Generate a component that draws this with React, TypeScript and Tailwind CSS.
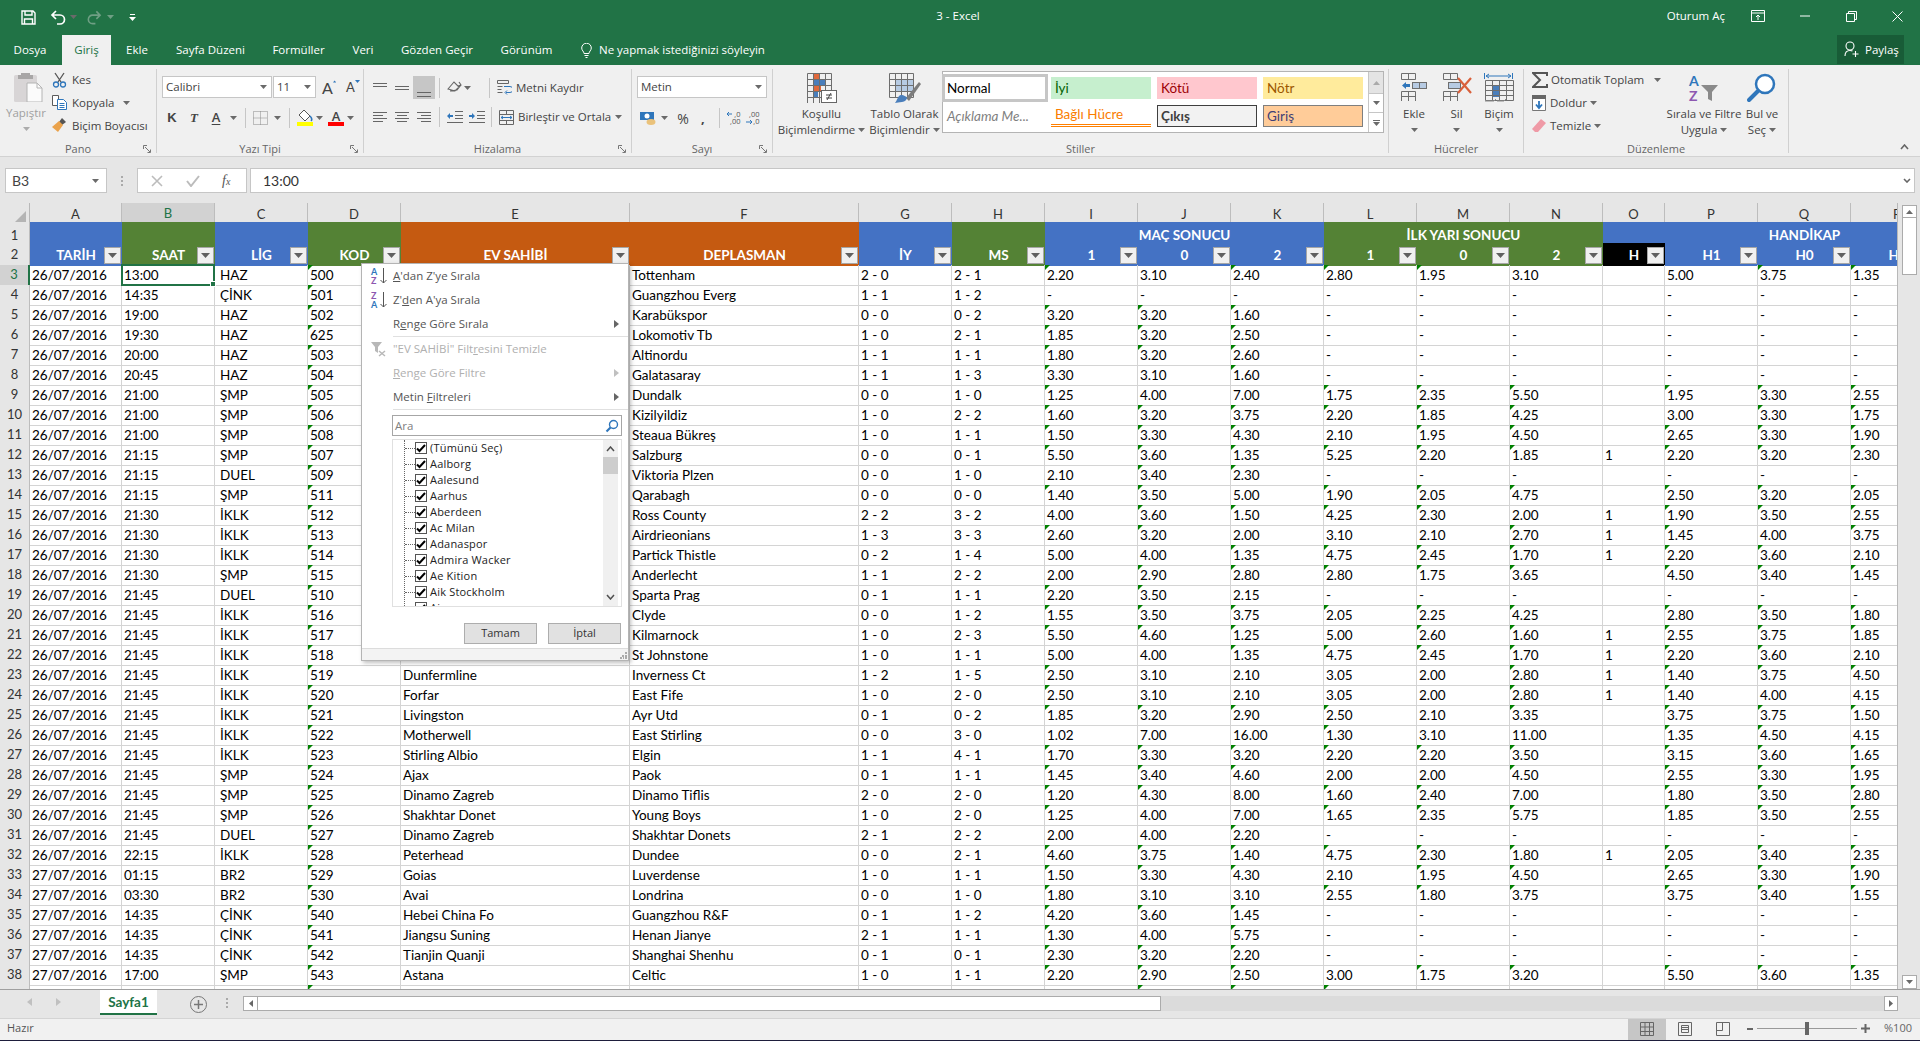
import React from "react";

const GRID = "grid grid-cols-[30px_92px_93px_93px_93px_229px_229px_93px_93px_93px_93px_93px_93px_93px_93px_62px_93px_93px_93px]";

const RAW = `26/07/2016|13:00|HAZ|500||Tottenham|2 - 0|2 - 1|2.20|3.10|2.40|2.80|1.95|3.10||5.00|3.75|1.35
26/07/2016|14:35|ÇİNK|501||Guangzhou Everg|1 - 1|1 - 2|-|-|-|-|-|-||-|-|-
26/07/2016|19:00|HAZ|502||Karabükspor|0 - 0|0 - 2|3.20|3.20|1.60|-|-|-||-|-|-
26/07/2016|19:30|HAZ|625||Lokomotiv Tb|1 - 0|2 - 1|1.85|3.20|2.50|-|-|-||-|-|-
26/07/2016|20:00|HAZ|503||Altinordu|1 - 1|1 - 1|1.80|3.20|2.60|-|-|-||-|-|-
26/07/2016|20:45|HAZ|504||Galatasaray|1 - 1|1 - 3|3.30|3.10|1.60|-|-|-||-|-|-
26/07/2016|21:00|ŞMP|505||Dundalk|0 - 0|1 - 0|1.25|4.00|7.00|1.75|2.35|5.50||1.95|3.30|2.55
26/07/2016|21:00|ŞMP|506||Kizilyildiz|1 - 0|2 - 2|1.60|3.20|3.75|2.20|1.85|4.25||3.00|3.30|1.75
26/07/2016|21:00|ŞMP|508||Steaua Bükreş|1 - 0|1 - 1|1.50|3.30|4.30|2.10|1.95|4.50||2.65|3.30|1.90
26/07/2016|21:15|ŞMP|507||Salzburg|0 - 0|0 - 1|5.50|3.60|1.35|5.25|2.20|1.85|1|2.20|3.20|2.30
26/07/2016|21:15|DUEL|509||Viktoria Plzen|0 - 0|1 - 0|2.10|3.40|2.30|-|-|-||-|-|-
26/07/2016|21:15|ŞMP|511||Qarabagh|0 - 0|0 - 0|1.40|3.50|5.00|1.90|2.05|4.75||2.50|3.20|2.05
26/07/2016|21:30|İKLK|512||Ross County|2 - 2|3 - 2|4.00|3.60|1.50|4.25|2.30|2.00|1|1.90|3.50|2.55
26/07/2016|21:30|İKLK|513||Airdrieonians|1 - 3|3 - 3|2.60|3.20|2.00|3.10|2.10|2.70|1|1.45|4.00|3.75
26/07/2016|21:30|İKLK|514||Partick Thistle|0 - 2|1 - 4|5.00|4.00|1.35|4.75|2.45|1.70|1|2.20|3.60|2.10
26/07/2016|21:30|ŞMP|515||Anderlecht|1 - 1|2 - 2|2.00|2.90|2.80|2.80|1.75|3.65||4.50|3.40|1.45
26/07/2016|21:45|DUEL|510||Sparta Prag|0 - 1|1 - 1|2.20|3.50|2.15|-|-|-||-|-|-
26/07/2016|21:45|İKLK|516||Clyde|0 - 0|1 - 2|1.55|3.50|3.75|2.05|2.25|4.25||2.80|3.50|1.80
26/07/2016|21:45|İKLK|517||Kilmarnock|1 - 0|2 - 3|5.50|4.60|1.25|5.00|2.60|1.60|1|2.55|3.75|1.85
26/07/2016|21:45|İKLK|518||St Johnstone|1 - 0|1 - 1|5.00|4.00|1.35|4.75|2.45|1.70|1|2.20|3.60|2.10
26/07/2016|21:45|İKLK|519|Dunfermline|Inverness Ct|1 - 2|1 - 5|2.50|3.10|2.10|3.05|2.00|2.80|1|1.40|3.75|4.50
26/07/2016|21:45|İKLK|520|Forfar|East Fife|1 - 0|2 - 0|2.50|3.10|2.10|3.05|2.00|2.80|1|1.40|4.00|4.15
26/07/2016|21:45|İKLK|521|Livingston|Ayr Utd|0 - 1|0 - 2|1.85|3.20|2.90|2.50|2.10|3.35||3.75|3.75|1.50
26/07/2016|21:45|İKLK|522|Motherwell|East Stirling|0 - 0|3 - 0|1.02|7.00|16.00|1.30|3.10|11.00||1.35|4.50|4.15
26/07/2016|21:45|İKLK|523|Stirling Albio|Elgin|1 - 1|4 - 1|1.70|3.30|3.20|2.20|2.20|3.50||3.15|3.60|1.65
26/07/2016|21:45|ŞMP|524|Ajax|Paok|0 - 1|1 - 1|1.45|3.40|4.60|2.00|2.00|4.50||2.55|3.30|1.95
26/07/2016|21:45|ŞMP|525|Dinamo Zagreb|Dinamo Tiflis|2 - 0|2 - 0|1.20|4.30|8.00|1.60|2.40|7.00||1.80|3.50|2.80
26/07/2016|21:45|ŞMP|526|Shakhtar Donet|Young Boys|1 - 0|2 - 0|1.25|4.00|7.00|1.65|2.35|5.75||1.85|3.50|2.55
26/07/2016|21:45|DUEL|527|Dinamo Zagreb|Shakhtar Donets|2 - 1|2 - 2|2.00|4.00|2.20|-|-|-||-|-|-
26/07/2016|22:15|İKLK|528|Peterhead|Dundee|0 - 0|2 - 1|4.60|3.75|1.40|4.75|2.30|1.80|1|2.05|3.40|2.35
27/07/2016|01:15|BR2|529|Goias|Luverdense|1 - 0|1 - 1|1.50|3.30|4.30|2.10|1.95|4.50||2.65|3.30|1.90
27/07/2016|03:30|BR2|530|Avai|Londrina|0 - 0|1 - 0|1.80|3.10|3.10|2.55|1.80|3.75||3.75|3.40|1.55
27/07/2016|14:35|ÇİNK|540|Hebei China Fo|Guangzhou R&F|0 - 1|1 - 2|4.20|3.60|1.45|-|-|-||-|-|-
27/07/2016|14:35|ÇİNK|541|Jiangsu Suning|Henan Jianye|2 - 1|1 - 1|1.30|4.00|5.75|-|-|-||-|-|-
27/07/2016|14:35|ÇİNK|542|Tianjin Quanji|Shanghai Shenhu|0 - 1|0 - 1|2.30|3.20|2.20|-|-|-||-|-|-
27/07/2016|17:00|ŞMP|543|Astana|Celtic|1 - 0|1 - 1|2.20|2.90|2.50|3.00|1.75|3.20||5.50|3.60|1.35
27/07/2016|17:00|ŞMP|544||||||2.30|2.30|2.30||||||||`;

const ROWS = RAW.split("\n").map((l) => l.split("|"));

function flagged(col: number, v: string) {
  if (col === 3) return true;
  if (col < 8 || col === 14 || !/^\d+\.\d\d$/.test(v)) return false;
  if (v === "3.15" || v === "2.05") return true;
  const [a, b] = v.split(".");
  return Number(a) < 10 && Number(b) >= 20;
}

const Caret = ({ className = "" }: { className?: string }) => (
  <svg width="7" height="4" viewBox="0 0 7 4" className={className}>
    <path d="M0 0h7L3.5 4z" fill="#6a6a6a" />
  </svg>
);

const Launcher = () => (
  <svg width="9" height="9" viewBox="0 0 9 9" className="justify-self-end mr-[4px] mt-[2px]">
    <path d="M.5 4V.5H4M2 2l5 5M7.5 4.5v3h-3" fill="none" stroke="#777" />
  </svg>
);

const Sep = ({ className = "" }: { className?: string }) => <div className={`w-px h-[20px] bg-[#c6c6c6] ${className}`} />;

function Lines({ w = 14, h = 14, rows, color = "#666" }: { w?: number; h?: number; rows: [number, number, number][]; color?: string }) {
  return (
    <svg width={w} height={h} viewBox={`0 0 ${w} ${h}`}>
      {rows.map(([y, x, l], i) => (
        <rect key={i} x={x} y={y} width={l} height={1} fill={color} />
      ))}
    </svg>
  );
}

function Group({ label, width, launcher, children }: { label: string; width: string; launcher?: boolean; children: React.ReactNode }) {
  return (
    <div className={`${width} shrink-0 h-[84px] mt-[4px] border-r border-[#d0d0d0]`}>
      <div className="h-[74px]">{children}</div>
      <div className="h-[10px] grid grid-cols-[1fr_auto_1fr] items-start leading-[12px] text-[11px] text-[#666]">
        <span />
        <span>{label}</span>
        {launcher ? <Launcher /> : <span />}
      </div>
    </div>
  );
}

function TitleBar() {
  return (
    <div className="h-[35px] grid grid-cols-[1fr_auto_1fr] items-center text-white text-[11.5px]">
      <div className="flex items-center pl-[21px] -mt-[1px]">
        <svg width="15" height="15" viewBox="0 0 15 15" fill="none" stroke="#fff" strokeWidth="1.4">
          <path d="M1 1h11l2 2v11H1z" />
          <path d="M4 1v4h7V1M3.5 14V9h8v5" />
        </svg>
        <svg className="ml-[14px]" width="17" height="15" viewBox="0 0 17 15" fill="none" stroke="#fff" strokeWidth="1.7">
          <path d="M6 1 2 5l4 4M2 5h8a4.5 4.5 0 0 1 0 9H7" />
        </svg>
        <Caret className="ml-[3px]" />
        <svg className="ml-[9px]" width="16" height="15" viewBox="0 0 17 15" fill="none" stroke="#6f9f84" strokeWidth="1.7">
          <path d="M11 1l4 4-4 4M15 5H7a4.5 4.5 0 0 0 0 9h3" />
        </svg>
        <svg className="ml-[5px]" width="7" height="4" viewBox="0 0 7 4"><path d="M0 0h7L3.5 4z" fill="#6f9f84" /></svg>
        <svg className="ml-[15px]" width="7" height="7" viewBox="0 0 7 7"><path d="M1 0h5v1H1zM0 3h7L3.5 7z" fill="#fff" /></svg>
      </div>
      <div className="text-center pr-[4px] -mt-[3px]">3 - Excel</div>
      <div className="flex items-center justify-end pr-[17px] -mt-[3px]">
        <span>Oturum Aç</span>
        <svg className="ml-[26px]" width="14" height="12" viewBox="0 0 14 12" fill="none" stroke="#fff">
          <path d="M.5 .5h13v11H.5zM.5 3h13M7 10V5M5 7l2-2 2 2" />
        </svg>
        <svg className="ml-[35px]" width="10" height="2" viewBox="0 0 10 2"><path d="M0 1h10" stroke="#fff" /></svg>
        <svg className="ml-[36px]" width="11" height="11" viewBox="0 0 11 11" fill="none" stroke="#fff">
          <path d="M.5 2.5h8v8h-8zM2.5 2.5v-2h8v8h-2" />
        </svg>
        <svg className="ml-[35px]" width="11" height="11" viewBox="0 0 11 11" fill="none" stroke="#fff"><path d="M.5.5l10 10M10.5.5l-10 10" /></svg>
      </div>
    </div>
  );
}

function TabsBar() {
  const tabs: [string, string][] = [
    ["Dosya", "w-[62px] pr-[2px]"],
    ["Giriş", "w-[49px]"],
    ["Ekle", "w-[52px]"],
    ["Sayfa Düzeni", "w-[95px]"],
    ["Formüller", "w-[81px]"],
    ["Veri", "w-[48px]"],
    ["Gözden Geçir", "w-[100px]"],
    ["Görünüm", "w-[79px]"],
  ];
  return (
    <div className="h-[30px] flex text-white text-[11.5px]">
      {tabs.map(([t, w]) => (
        <div key={t} className={`${w} flex items-center justify-center ${t === "Giriş" ? "bg-[#f0f0f0] text-[#217346]" : ""}`}>{t}</div>
      ))}
      <div className="flex items-center pl-[15px]">
        <svg width="11" height="15" viewBox="0 0 11 15" fill="none" stroke="#fff">
          <path d="M3 10.5C3 8.5 .7 7.5.7 5A4.8 4.8 0 0 1 10.3 5C10.3 7.500 8 8.500 8 10.500zM3.500 12.500h4M4.500 14.500h2" />
        </svg>
        <span className="ml-[7px]">Ne yapmak istediğinizi söyleyin</span>
      </div>
      <div className="flex-1" />
      <div className="w-[67px] h-[29px] mr-[16px] bg-[#185c37] flex items-center pl-[7px]">
        <svg width="15" height="17" viewBox="0 0 15 17" fill="none" stroke="#fff" strokeWidth="1.1">
          <circle cx="6" cy="5" r="4" />
          <path d="M1 15c0-4 2-5.500 5-5.500 1 0 2 .2 2.500.5M11.500 10v6M8.500 13h6" />
        </svg>
        <span className="ml-[6px]">Paylaş</span>
      </div>
    </div>
  );
}

function Combo({ text, width }: { text: string; width: string }) {
  return (
    <div className={`${width} h-[22px] bg-white border border-[#c6c6c6] flex items-center justify-between pl-[3px] pr-[4px]`}>
      <span>{text}</span>
      <Caret />
    </div>
  );
}

function Pano() {
  return (
    <Group label="Pano" width="w-[157px]" launcher>
      <div className="flex">
        <div className="w-[46px] ml-[3px] flex flex-col items-center text-[#a0a0a0]">
          <svg className="mt-[3px] ml-[4px]" width="30" height="30" viewBox="0 0 30 30">
            <rect x="1" y="3" width="23" height="27" rx="1.500" fill="#d8d5d6" />
            <path d="M8 3V1h9v2h3v4H5V3z" fill="#a8a6a6" />
            <path d="M14 11h10l5 5v14H14z" fill="#fbfbfb" stroke="#b4b4b4" />
            <path d="M24 11v5h5" fill="none" stroke="#b4b4b4" />
          </svg>
          <span className="mt-[3px] leading-[16px]">Yapıştır</span>
          <Caret className="mt-[6px] opacity-50" />
        </div>
        <div className="ml-[3px] -mt-[1px] flex flex-col">
          <div className="h-[23px] flex items-center">
            <svg width="15" height="16" viewBox="0 0 15 16" fill="none">
              <path d="M3 1l6 9M12 1 6 10" stroke="#555" strokeWidth="1.300" />
              <circle cx="4" cy="12.500" r="2.500" stroke="#2f76bb" strokeWidth="1.300" />
              <circle cx="11" cy="12.500" r="2.500" stroke="#2f76bb" strokeWidth="1.300" />
            </svg>
            <span className="ml-[5px]">Kes</span>
          </div>
          <div className="h-[23px] flex items-center">
            <svg width="15" height="15" viewBox="0 0 15 15" fill="none" stroke="#5b5b5b">
              <path d="M.5.500h6v10h-6z" fill="#fff" />
              <path d="M5.500 4.500h6l3 3v7h-9z" fill="#fff" stroke="#2f76bb" />
              <path d="M7.500 8.500h5M7.500 10.500h5M7.500 12.500h5" stroke="#2f76bb" />
            </svg>
            <span className="ml-[5px]">Kopyala</span>
            <Caret className="ml-[9px]" />
          </div>
          <div className="h-[23px] flex items-center">
            <svg width="15" height="15" viewBox="0 0 15 15">
              <path d="M10 0l4 4-4 3-3-3z" fill="#555" />
              <path d="M7 3l4 4-5 7-6-5z" fill="#eaa24b" />
            </svg>
            <span className="ml-[5px] whitespace-nowrap">Biçim Boyacısı</span>
          </div>
        </div>
      </div>
    </Group>
  );
}

function GrowA({ up }: { up: boolean }) {
  return (
    <div className="flex items-start w-[14px] h-[18px]">
      <span className={`font-['Lato',sans-serif] text-[#444] ${up ? "text-[16px] leading-[19px]" : "text-[13px] leading-[19px]"}`}>A</span>
      <svg className="mt-[2px]" width="5" height="3" viewBox="0 0 5 3"><path d={up ? "M0 3h5L2.500 0z" : "M0 0h5L2.500 3z"} fill="#2f76bb" /></svg>
    </div>
  );
}

function Yazi() {
  return (
    <Group label="Yazı Tipi" width="w-[207px]" launcher>
      <div className="flex items-center pl-[5px] pt-[7px]">
        <Combo text="Calibri" width="w-[110px]" />
        <Combo text="11" width="w-[43px] ml-[1px]" />
        <div className="ml-[6px] w-[16px]"><GrowA up /></div>
        <div className="ml-[7px] w-[14px] pl-[1px]"><GrowA up={false} /></div>
      </div>
      <div className="flex items-center pl-[5px] mt-[9px] h-[22px] text-[#444]">
        <span className="w-[20px] text-center font-bold text-[13px] font-['Liberation_Sans',sans-serif]">K</span>
        <span className="w-[20px] ml-[2px] text-center font-bold italic text-[13px] font-['Liberation_Serif',serif]">T</span>
        <span className="w-[16px] ml-[4px] text-center text-[13px] font-semibold underline underline-offset-2">A</span>
        <Caret className="ml-[6px]" />
        <Sep className="ml-[8px]" />
        <svg className="ml-[7px]" width="15" height="14" viewBox="0 0 15 14" fill="none" stroke="#888" strokeDasharray="1 1">
          <path d="M.5.500h14v13H.5zM7.500.5v13M.5 7h14" />
        </svg>
        <Caret className="ml-[6px]" />
        <Sep className="ml-[8px]" />
        <div className="ml-[7px] w-[16px] flex flex-col items-center">
          <svg width="16" height="12" viewBox="0 0 16 12" fill="none">
            <path d="M7 0l6 6-5 5-6-6z" fill="#fff" stroke="#555" />
            <path d="M13 6c2 2 2 4 1 5" stroke="#2f76bb" strokeWidth="1.500" />
          </svg>
          <div className="w-[16px] h-[4px] bg-[#ffff00]" />
        </div>
        <Caret className="ml-[3px]" />
        <div className="ml-[5px] w-[16px] flex flex-col items-center text-[13px] leading-[12px] font-semibold">
          <span>A</span>
          <div className="w-[16px] h-[4px] bg-[#ff0000]" />
        </div>
        <Caret className="ml-[3px]" />
      </div>
    </Group>
  );
}

const Ic14 = ({ rows }: { rows: [number, number, number][] }) => <Lines rows={rows} />;

function Hizala() {
  const full = (ys: number[]): [number, number, number][] => ys.map((y) => [y, 0, 14]);
  return (
    <Group label="Hizalama" width="w-[268px]" launcher>
      <div className="flex items-center pl-[9px] pt-[7px] h-[30px]">
        <Ic14 rows={full([2, 5, 8]).slice(0, 2)} />
        <div className="ml-[8px]"><Ic14 rows={full([5, 8])} /></div>
        <div className="ml-[4px] w-[22px] h-[23px] bg-[#c6c6c6] flex items-end justify-center pb-[1px]"><Ic14 rows={full([8, 12])} /></div>
        <Sep className="ml-[4px]" />
        <svg className="ml-[7px]" width="15" height="15" viewBox="0 0 15 15" fill="none" stroke="#666">
          <path d="M1 9l6-7 5 5-4 4zM3 11l7-1 4-5M12 2l2 3-3 1" strokeWidth="1.100" />
        </svg>
        <Caret className="ml-[2px]" />
        <Sep className="ml-[18px]" />
        <svg className="ml-[7px]" width="15" height="15" viewBox="0 0 15 15" fill="none" stroke="#666">
          <path d="M.5.500h11v3H.5zM.5 6.500h5M.5 9.500h4M.5 12.500h5" />
          <path d="M7 6.500h6a1.500 1.500 0 0 1 0 6h-4M10 10.500l-2 2 2 2" stroke="#2f76bb" />
        </svg>
        <span className="ml-[4px] whitespace-nowrap">Metni Kaydır</span>
      </div>
      <div className="flex items-center pl-[9px] mt-[7px] h-[22px]">
        <Ic14 rows={[[2, 0, 14], [5, 0, 10], [8, 0, 14], [11, 0, 10]]} />
        <div className="ml-[8px]"><Ic14 rows={[[2, 0, 14], [5, 2, 10], [8, 0, 14], [11, 2, 10]]} /></div>
        <div className="ml-[8px]"><Ic14 rows={[[2, 0, 14], [5, 4, 10], [8, 0, 14], [11, 4, 10]]} /></div>
        <Sep className="ml-[8px]" />
        <svg className="ml-[7px]" width="16" height="14" viewBox="0 0 16 14"><path d="M8 1h8v1H8zM8 5h8v1H8zM8 8h8v1H8zM0 12h16v1H0z" fill="#666" /><path d="M0 6l3-3v2h3v2H3v2z" fill="#2f76bb" /></svg>
        <svg className="ml-[6px]" width="16" height="14" viewBox="0 0 16 14"><path d="M8 1h8v1H8zM8 5h8v1H8zM8 8h8v1H8zM0 12h16v1H0z" fill="#666" /><path d="M6 6 3 3v2H0v2h3v2z" fill="#2f76bb" /></svg>
        <Sep className="ml-[6px]" />
        <svg className="ml-[7px]" width="15" height="15" viewBox="0 0 15 15" fill="none" stroke="#666">
          <path d="M.5.500h14v14H.5zM.5 4.500h14M.5 10.500h14M7.500.5v4M7.500 10.500v4" />
          <path d="M2 7.500h11M4 6 2 7.500 4 9M11 6l2 1.500L11 9" stroke="#2f76bb" />
        </svg>
        <span className="ml-[4px] w-[92px] whitespace-nowrap">Birleştir ve Ortala</span>
        <Caret className="ml-[5px]" />
      </div>
    </Group>
  );
}

function Sayi() {
  return (
    <Group label="Sayı" width="w-[141px]" launcher>
      <div className="pl-[5px] pt-[7px]"><Combo text="Metin" width="w-[130px]" /></div>
      <div className="flex items-center pl-[8px] mt-[9px] h-[22px] text-[#444]">
        <svg width="17" height="15" viewBox="0 0 17 15">
          <rect x="0" y="1" width="14" height="8" fill="#2f76bb" />
          <circle cx="7" cy="5" r="2.500" fill="#fff" />
          <ellipse cx="11" cy="11" rx="4.500" ry="3" fill="#eac27b" />
        </svg>
        <Caret className="ml-[4px]" />
        <span className="ml-[8px] w-[14px] text-center text-[14px]">%</span>
        <span className="ml-[11px] w-[6px] font-bold text-[13px] leading-[8px]">,</span>
        <Sep className="ml-[12px]" />
        <div className="ml-[7px] w-[16px] h-[15px] flex items-center">
          <svg width="6" height="15" viewBox="0 0 6 15"><path d="M0 3h5M2 1 0 3l2 2" fill="none" stroke="#2f76bb" /></svg>
          <span className="text-[7.5px] leading-[7.5px] text-[#555] whitespace-pre text-right -ml-[3px]">{",0\n,00"}</span>
        </div>
        <div className="ml-[6px] w-[16px] h-[15px] flex items-center">
          <span className="text-[7.5px] leading-[7.5px] text-[#555] whitespace-pre text-right">{",00\n,0"}</span>
          <svg className="-ml-[14px]" width="7" height="15" viewBox="0 0 7 15"><path d="M0 11h6M4 9l2 2-2 2" fill="none" stroke="#2f76bb" /></svg>
        </div>
      </div>
    </Group>
  );
}

function Btn({ icon, l1, l2, width }: { icon: React.ReactNode; l1: string; l2?: string; width: string }) {
  return (
    <div className={`${width} shrink-0 flex flex-col items-center pt-[4px]`}>
      <div className="h-[30px] flex items-start justify-center">{icon}</div>
      <span className="mt-[3px] leading-[16px] whitespace-nowrap">{l1}</span>
      {l2 !== undefined ? (
        <span className="flex items-center leading-[16px] whitespace-nowrap">{l2}<Caret className="ml-[3px]" /></span>
      ) : (
        <Caret className="mt-[6px]" />
      )}
    </div>
  );
}

function MiniGrid({ x, y, cols, rows, s = 6, h = 5 }: { x: number; y: number; cols: number; rows: number; s?: number; h?: number }) {
  const p: string[] = [];
  for (let i = 0; i <= cols; i++) p.push(`M${x + i * s + 0.5} ${y + 0.5}v${rows * h}`);
  for (let i = 0; i <= rows; i++) p.push(`M${x + 0.5} ${y + i * h + 0.5}h${cols * s}`);
  return <path d={p.join("")} fill="none" stroke="#6e6e6e" />;
}

function Stiller() {
  return (
    <Group label="Stiller" width="w-[616px]">
      <div className="flex">
        <Btn
          width="w-[95px] pl-[2px]"
          l1="Koşullu"
          l2="Biçimlendirme"
          icon={
            <svg width="30" height="30" viewBox="0 0 30 30">
              <rect x="6" y="1" width="6" height="5" fill="#e0693c" />
              <rect x="6" y="7" width="12" height="5" fill="#4a7ebb" />
              <rect x="6" y="13" width="8" height="5" fill="#e0693c" />
              <rect x="6" y="19" width="5" height="5" fill="#4a7ebb" />
              <MiniGrid x={0} y={0} cols={4} rows={5} s={6} h={6} />
              <rect x="14.500" y="17.500" width="15" height="12" fill="#fff" stroke="#666" />
              <path d="M19 22h6M19 25h6M24 20l-4 7" fill="none" stroke="#444" />
            </svg>
          }
        />
        <Btn
          width="w-[73px]"
          l1="Tablo Olarak"
          l2="Biçimlendir"
          icon={
            <svg width="32" height="30" viewBox="0 0 32 30">
              <rect x="6" y="6" width="18" height="12" fill="#b7cbe3" />
              <MiniGrid x={0} y={0} cols={4} rows={4} s={6} h={6} />
              <path d="M17 25 30 9l2 2-12 17z" fill="#7d7d7d" />
              <path d="M12 22c3 0 6 2 6 3s-2 4-5 4-5 1-7 1c2-2 3-8 6-8z" fill="#4a7ebb" />
            </svg>
          }
        />
        <div className="ml-[1px] mt-[2px] w-[442px] h-[62px] bg-white border border-[#b4b4b4] flex text-[13.5px] font-['Lato',sans-serif]">
          <div className="pl-[2px] pt-[5px] grid grid-cols-[repeat(4,100px)] grid-rows-[22px_22px] gap-x-[6px] gap-y-[6px]">
            <div className="bg-white outline-[3px] outline-[#c6c6c6] flex items-center pl-[2px] text-black">Normal</div>
            <div className="bg-[#c6efce] text-[#006100] flex items-center pl-[4px]">İyi</div>
            <div className="bg-[#ffc7ce] text-[#9c0006] flex items-center pl-[4px]">Kötü</div>
            <div className="bg-[#ffeb9c] text-[#9c5700] flex items-center pl-[4px]">Nötr</div>
            <div className="italic text-[#7f7f7f] flex items-center pl-[2px]">Açıklama Me...</div>
            <div className="text-[#fa7d00] border-b-[3px] border-double border-[#ff8001] flex items-center pl-[4px]">Bağlı Hücre</div>
            <div className="bg-[#f2f2f2] border border-[#3f3f3f] font-bold text-[#3f3f3f] flex items-center pl-[3px]">Çıkış</div>
            <div className="bg-[#ffcc99] border border-[#7f7f7f] text-[#3f3f76] flex items-center pl-[3px]">Giriş</div>
          </div>
          <div className="ml-[5px] w-[14px] flex-1 flex flex-col border-l border-[#c6c6c6]">
            <div className="h-[21px] bg-[#e4e4e4] flex items-center justify-center"><svg width="7" height="4" viewBox="0 0 7 4"><path d="M0 4h7L3.500 0z" fill="#aaa" /></svg></div>
            <div className="h-[20px] bg-white border-y border-[#c6c6c6] flex items-center justify-center"><Caret /></div>
            <div className="flex-1 bg-white flex flex-col items-center justify-center gap-[1px]"><div className="w-[7px] h-px bg-[#6a6a6a]" /><Caret /></div>
          </div>
        </div>
      </div>
    </Group>
  );
}

function Hucreler() {
  return (
    <Group label="Hücreler" width="w-[135px]">
      <div className="flex pl-[4px]">
        <Btn
          width="w-[42px]"
          l1="Ekle"
          icon={
            <svg width="28" height="28" viewBox="0 0 28 28">
              <MiniGrid x={1} y={0} cols={2} rows={1} s={7} h={6} />
              <rect x="12.500" y="9.500" width="14" height="6" fill="#b7cbe3" stroke="#6e6e6e" />
              <path d="M19.500 9.500v6" stroke="#6e6e6e" />
              <path d="M2 12.500l4-3.500v2h4v3H6v2z" fill="#2f76bb" />
              <MiniGrid x={1} y={18} cols={2} rows={2} s={7} h={5} />
            </svg>
          }
        />
        <Btn
          width="w-[43px]"
          l1="Sil"
          icon={
            <svg width="32" height="28" viewBox="0 0 32 28">
              <MiniGrid x={2} y={0} cols={2} rows={1} s={7} h={6} />
              <rect x="7.500" y="9.500" width="12" height="6" fill="#b7cbe3" stroke="#6e6e6e" />
              <MiniGrid x={2} y={18} cols={2} rows={2} s={7} h={5} />
              <path d="M17 5l13 15M30 5 17 20" stroke="#d9603b" strokeWidth="2.200" />
            </svg>
          }
        />
        <Btn
          width="w-[42px]"
          l1="Biçim"
          icon={
            <svg width="30" height="30" viewBox="0 0 30 30">
              <path d="M.5 0v6M28.500 0v6M2 3h25M5 1 2 3l3 2M24 1l3 2-3 2" fill="none" stroke="#2f76bb" />
              <rect x="8" y="12" width="8" height="12" fill="#4a7ebb" />
              <MiniGrid x={1} y={7} cols={4} rows={4} s={7} h={5} />
              <path d="M1 28h9l2-2M13 28h7l2-2" fill="none" stroke="#8a8a8a" />
            </svg>
          }
        />
      </div>
    </Group>
  );
}

function Duzenleme() {
  return (
    <Group label="Düzenleme" width="w-[265px]">
      <div className="flex">
        <div className="w-[143px] pl-[8px] -mt-[1px] flex flex-col">
          <div className="h-[23px] flex items-center">
            <svg width="16" height="16" viewBox="0 0 16 16"><path d="M15 4V1H1l7 7-7 7h14v-3" fill="none" stroke="#555" strokeWidth="2" /></svg>
            <span className="ml-[3px] whitespace-nowrap">Otomatik Toplam</span>
            <Caret className="ml-[10px]" />
          </div>
          <div className="h-[23px] flex items-center">
            <svg width="15" height="16" viewBox="0 0 15 16"><path d="M.5.500h13v15H.5z" fill="#fff" stroke="#777" /><rect x="0" y="0" width="14" height="4" fill="#666" /><path d="M7 6v6M4 9.500 7 13l3-3.500" fill="none" stroke="#2f76bb" strokeWidth="1.800" /></svg>
            <span className="ml-[3px]">Doldur</span>
            <Caret className="ml-[3px]" />
          </div>
          <div className="h-[23px] flex items-center">
            <svg width="15" height="15" viewBox="0 0 15 15"><path d="M9 1l5 4-8 9H3l-3-3z" fill="#ef9aa6" /></svg>
            <span className="ml-[3px]">Temizle</span>
            <Caret className="ml-[3px]" />
          </div>
        </div>
        <Btn
          width="w-[74px]"
          l1="Sırala ve Filtre"
          l2="Uygula"
          icon={
            <div className="flex items-end">
              <div className="flex flex-col font-['Lato',sans-serif] font-bold text-[14px] leading-[15px] w-[12px]">
                <span className="text-[#2f76bb]">A</span>
                <span className="text-[#8d57b0]">Z</span>
              </div>
              <svg width="18" height="18" viewBox="0 0 18 18" className="mb-[1px]"><path d="M0 1h17l-6 7v9l-4-2V8z" fill="#8a8a8a" /></svg>
            </div>
          }
        />
        <Btn
          width="w-[42px]"
          l1="Bul ve"
          l2="Seç"
          icon={
            <svg width="30" height="30" viewBox="0 0 30 30" fill="none">
              <circle cx="18" cy="11" r="9" stroke="#2f76bb" strokeWidth="2.500" fill="#fff" />
              <path d="M11 18 2 27" stroke="#2f76bb" strokeWidth="4" strokeLinecap="round" />
            </svg>
          }
        />
      </div>
    </Group>
  );
}

function Ribbon() {
  return (
    <div className="h-[92px] bg-[#f0f0f0] border-b border-[#d2d2d2] flex text-[11.5px] text-[#444]">
      <Pano />
      <Yazi />
      <Hizala />
      <Sayi />
      <Stiller />
      <Hucreler />
      <Duzenleme />
      <div className="flex-1 flex items-end justify-end pb-[6px] pr-[11px]">
        <svg width="9" height="6" viewBox="0 0 9 6" fill="none" stroke="#666" strokeWidth="1.600"><path d="M1 5l3.500-4L8 5" /></svg>
      </div>
    </div>
  );
}

function FormulaBar() {
  return (
    <div className="h-[46px] bg-[#e6e6e6] flex items-start pt-[11px] pl-[5px] pr-[5px] text-[#444]">
      <div className="w-[102px] h-[25px] bg-white border border-[#c6c6c6] flex items-center justify-between pl-[6px] pr-[7px] font-['Lato',sans-serif] text-[14px]">
        <span>B3</span>
        <Caret />
      </div>
      <div className="w-[30px] h-[25px] flex flex-col items-center justify-center gap-[2px]">
        <div className="w-[2px] h-[2px] bg-[#aaa]" />
        <div className="w-[2px] h-[2px] bg-[#aaa]" />
        <div className="w-[2px] h-[2px] bg-[#aaa]" />
      </div>
      <div className="w-[110px] h-[25px] bg-white border border-[#c6c6c6] flex items-center">
        <svg className="ml-[13px]" width="12" height="12" viewBox="0 0 12 12" fill="none" stroke="#bcbcbc" strokeWidth="1.600"><path d="M1 1l10 10M11 1 1 11" /></svg>
        <svg className="ml-[23px]" width="14" height="12" viewBox="0 0 14 12" fill="none" stroke="#bcbcbc" strokeWidth="2"><path d="M1 6l4 5 8-10" /></svg>
        <span className="ml-[22px] italic text-[14px] font-['Liberation_Serif',serif] text-[#555]">f<span className="text-[10px]">x</span></span>
      </div>
      <div className="ml-[3px] flex-1 h-[25px] bg-white border border-[#c6c6c6] flex items-center justify-between pl-[12px] pr-[3px]">
        <span className="font-['Lato',sans-serif] text-[14px] text-[#333]">13:00</span>
        <svg width="8" height="5" viewBox="0 0 8 5" fill="none" stroke="#666" strokeWidth="1.600"><path d="M1 1l3 3 3-3" /></svg>
      </div>
    </div>
  );
}

function FilterBtn() {
  return (
    <div className="absolute right-[1px] bottom-[2px] w-[17px] h-[17px] bg-[#f0f0f0] border border-[#a6a6a6] flex items-center justify-center">
      <svg width="9" height="5" viewBox="0 0 9 5"><path d="M0 0h9L4.500 5z" fill="#606060" /></svg>
    </div>
  );
}

const BLUE = "bg-[#4472c4]";
const GREEN = "bg-[#548235]";
const ORANGE = "bg-[#c55a11]";

function ColumnHeader() {
  const letters = "ABCDEFGHIJKLMNOPQR".split("");
  return (
    <div className={`${GRID} h-[19px] bg-[#e6e6e6] text-[#333] text-[13px]`}>
      <div className="border-r border-b border-[#b8b8b8] flex items-end justify-end pr-[3px] pb-[3px]">
        <svg width="11" height="11" viewBox="0 0 11 11"><path d="M11 0v11H0z" fill="#b4b4b4" /></svg>
      </div>
      {letters.map((c) => (
        <div
          key={c}
          className={`flex items-center justify-center pt-[1px] border-r border-[#bdbdbd] ${c === "B" ? "bg-[#d2d2d2] text-[#217346] border-b-2 border-b-[#217346]" : "border-b border-b-[#9f9f9f]"}`}
        >
          {c}
        </div>
      ))}
    </div>
  );
}

function SheetHeader() {
  const row2: [string, string][] = [
    ["TARİH", BLUE], ["SAAT", GREEN], ["LİG", BLUE], ["KOD", GREEN], ["EV SAHİBİ", ORANGE], ["DEPLASMAN", ORANGE], ["İY", BLUE], ["MS", GREEN],
    ["1", BLUE], ["0", BLUE], ["2", BLUE], ["1", GREEN], ["0", GREEN], ["2", GREEN], ["H", "bg-black"], ["H1", BLUE], ["H0", BLUE], ["H2", BLUE],
  ];
  return (
    <div className="text-white font-bold text-[13.5px]">
      <div className={`${GRID} h-[21px]`}>
        <div className="bg-[#e6e6e6] border-r border-[#bdbdbd] text-[#333] font-normal text-[13px] flex items-end justify-center">1</div>
        <div className={BLUE} />
        <div className={GREEN} />
        <div className={BLUE} />
        <div className={GREEN} />
        <div className={ORANGE} />
        <div className={ORANGE} />
        <div className={BLUE} />
        <div className={GREEN} />
        <div className={`${BLUE} col-span-3 flex items-center justify-center pt-[3px]`}>MAÇ SONUCU</div>
        <div className={`${GREEN} col-span-3 flex items-center justify-center pt-[3px]`}>İLK YARI SONUCU</div>
        <div className={BLUE} />
        <div className={`${BLUE} col-span-3 flex items-center justify-center pt-[3px]`}>HANDİKAP</div>
      </div>
      <div className={`${GRID} h-[22px]`}>
        <div className="bg-[#e6e6e6] border-r border-b border-[#bdbdbd] text-[#333] font-normal text-[13px] flex items-center justify-center pt-[2px]">2</div>
        {row2.map(([t, c], i) => (
          <div key={i} className={`relative ${c} flex items-center justify-center pt-[2px]`}>
            {t}
            <FilterBtn />
          </div>
        ))}
      </div>
    </div>
  );
}

function DataRow({ cells, n }: { cells: string[]; n: number }) {
  return (
    <div className={`${GRID} h-[20px] text-[13.5px] text-black`}>
      <div className={`border-r border-b border-[#bdbdbd] flex items-center justify-center text-[13px] ${n === 3 ? "bg-[#d2d2d2] text-[#217346] border-r-2 border-r-[#217346]" : "bg-[#e6e6e6] text-[#333]"}`}>{n}</div>
      {cells.map((v, i) => (
        <div key={i} className={`relative border-r border-b border-[#d4d4d4] overflow-hidden whitespace-nowrap leading-[20px] ${i === 2 ? "pl-[5px]" : "pl-[2px]"}`}>
          {v !== "" && flagged(i, v) && (
            <div className="absolute left-0 top-0 w-0 h-0 border-t-[5px] border-t-[#008000] border-r-[5px] border-r-transparent" />
          )}
          {v}
        </div>
      ))}
    </div>
  );
}

function SideScrollbar() {
  return (
    <div className="w-[22px] shrink-0 bg-[#e6e6e6] flex flex-col items-center pt-[2px]">
      <div className="w-[15px] h-[13px] bg-white border border-[#ababab] flex items-center justify-center">
        <svg width="7" height="4" viewBox="0 0 7 4"><path d="M0 4h7L3.500 0z" fill="#6a6a6a" /></svg>
      </div>
      <div className="w-[15px] h-[57px] bg-white border-x border-b border-[#ababab]" />
      <div className="flex-1" />
      <div className="w-[15px] h-[14px] bg-white border border-[#ababab] flex items-center justify-center"><Caret /></div>
    </div>
  );
}

function Check() {
  return (
    <div className="w-[12px] h-[12px] shrink-0 bg-white border border-[#555] flex items-center justify-center">
      <svg width="10" height="9" viewBox="0 0 10 9" fill="none" stroke="#000" strokeWidth="2"><path d="M1 4.500 3.500 7 9 1" /></svg>
    </div>
  );
}

function AZIcon({ first, second, up }: { first: string; second: string; up: boolean }) {
  return (
    <div className="flex items-center w-[16px] h-[18px]">
      <div className="flex flex-col font-['Lato',sans-serif] font-bold text-[9px] leading-[9px] w-[9px]">
        <span className={up ? "text-[#2f76bb]" : "text-[#8d57b0]"}>{first}</span>
        <span className={up ? "text-[#8d57b0]" : "text-[#2f76bb]"}>{second}</span>
      </div>
      <svg width="7" height="16" viewBox="0 0 7 16"><path d="M3.500 0v15M.5 12l3 3 3-3" fill="none" stroke="#555" /></svg>
    </div>
  );
}

function MenuItem({ icon, arrow, off, children }: { icon?: React.ReactNode; arrow?: boolean; off?: boolean; children: React.ReactNode }) {
  return (
    <div className={`h-[24px] flex items-center ${off ? "text-[#b0b0b0]" : "text-[#555]"}`}>
      <div className="w-[31px] flex justify-center pl-[3px]">{icon}</div>
      <span className="flex-1 whitespace-nowrap">{children}</span>
      {arrow && (
        <svg className="mr-[9px]" width="5" height="8" viewBox="0 0 5 8"><path d="M0 0l5 4-5 4z" fill={off ? "#c0c0c0" : "#666"} /></svg>
      )}
    </div>
  );
}

function FilterMenu() {
  const items = ["(Tümünü Seç)", "Aalborg", "Aalesund", "Aarhus", "Aberdeen", "Ac Milan", "Adanaspor", "Admira Wacker", "Ae Kition", "Aik Stockholm", "Ajax"];
  return (
    <div className="absolute left-[361px] top-[60px] w-[268px] h-[398px] bg-white border border-[#b4b4b4] shadow-[2px_2px_4px_rgba(0,0,0,0.25)] flex flex-col text-[11.5px] font-['Open_Sans',sans-serif]">
      <MenuItem icon={<AZIcon first="A" second="Z" up />}><u>A</u>'dan Z'ye Sırala</MenuItem>
      <MenuItem icon={<AZIcon first="Z" second="A" up={false} />}>Z'<u>d</u>en A'ya Sırala</MenuItem>
      <MenuItem arrow>R<u>e</u>nge Göre Sırala</MenuItem>
      <div className="h-px ml-[31px] bg-[#e0e0e0]" />
      <MenuItem
        off
        icon={
          <svg width="16" height="16" viewBox="0 0 16 16">
            <path d="M0 1h11L7 6v6L4 10V6z" fill="#b8b8b8" />
            <path d="M8 10l6 5M14 10l-6 5" stroke="#b8b8b8" strokeWidth="1.500" />
          </svg>
        }
      >
        "EV SAHİBİ" Filt<u>r</u>esini Temizle
      </MenuItem>
      <MenuItem off arrow><u>R</u>enge Göre Filtre</MenuItem>
      <MenuItem arrow>Metin <u>F</u>iltreleri</MenuItem>
      <div className="h-px ml-[31px] bg-[#e0e0e0]" />
      <div className="ml-[30px] mt-[5px] w-[230px] h-[21px] border border-[#a6a6a6] flex items-center justify-between pl-[2px] pr-[2px] text-[#808080]">
        <span>Ara</span>
        <svg width="14" height="14" viewBox="0 0 14 14" fill="none" stroke="#2f76bb">
          <circle cx="8.500" cy="5.500" r="4" strokeWidth="1.400" />
          <path d="M5.500 8.500 1.500 12.500" strokeWidth="2.200" />
        </svg>
      </div>
      <div className="ml-[30px] mt-[3px] w-[230px] h-[168px] border border-[#e0e0e0] flex overflow-hidden text-[11px] text-[#222]">
        <div className="flex-1 overflow-hidden pl-[11px]">
          <div className="border-l border-dotted border-[#666]">
            {items.map((t) => (
              <div key={t} className="h-[16px] flex items-center">
                <div className="w-[10px] border-t border-dotted border-[#666]" />
                <Check />
                <span className="ml-[3px] whitespace-nowrap tracking-[0.2px]">{t}</span>
              </div>
            ))}
          </div>
        </div>
        <div className="w-[15px] mr-[3px] bg-[#f0f0f0] flex flex-col items-center">
          <svg className="mt-[6px]" width="9" height="6" viewBox="0 0 9 6" fill="none" stroke="#505050" strokeWidth="1.500"><path d="M1 5l3.500-4L8 5" /></svg>
          <div className="mt-[5px] w-full h-[17px] bg-[#cdcdcd]" />
          <div className="flex-1" />
          <svg className="mb-[6px]" width="9" height="6" viewBox="0 0 9 6" fill="none" stroke="#505050" strokeWidth="1.500"><path d="M1 1l3.500 4L8 1" /></svg>
        </div>
      </div>
      <div className="mt-[16px] flex text-[#333] text-[11px]">
        <div className="ml-[102px] w-[73px] h-[21px] bg-[#e1e1e1] border border-[#adadad] flex items-center justify-center">Tamam</div>
        <div className="ml-[11px] w-[73px] h-[21px] bg-[#e1e1e1] border border-[#adadad] flex items-center justify-center">İptal</div>
      </div>
      <div className="mt-[4px] flex-1 bg-[#f3f3f3] border-t border-[#dcdcdc] flex items-end justify-end pr-[1px] pb-[1px]">
        <svg width="7" height="7" viewBox="0 0 7 7"><path d="M5 0h2v2H5zM2 3h2v2H2zM5 3h2v2H5zM0 5h2v2H0zM3 5h1v2H3zM5 5h2v2H5z" fill="#aaa" /></svg>
      </div>
    </div>
  );
}

function Sheet() {
  return (
    <div className="relative flex-1 min-h-0 flex bg-white font-['Lato',sans-serif] border-b border-[#9f9f9f]">
      <div className="w-[1898px] shrink-0 overflow-hidden border-r border-[#b8b8b8]">
        <ColumnHeader />
        <SheetHeader />
        {ROWS.map((r, i) => (
          <DataRow key={i} cells={r} n={i + 3} />
        ))}
      </div>
      <SideScrollbar />
      <div className="absolute left-[121px] top-[61px] w-[94px] h-[22px] border-2 border-[#217346]">
        <div className="absolute -right-[3px] -bottom-[3px] w-[6px] h-[6px] bg-[#217346] border border-white" />
      </div>
      <FilterMenu />
    </div>
  );
}

function SheetTabs() {
  return (
    <div className="h-[28px] bg-[#e6e6e6] flex items-start text-[#aaa]">
      <div className="w-[100px] h-[24px] flex items-center pl-[27px] gap-[24px]">
        <svg width="5" height="8" viewBox="0 0 5 8"><path d="M5 0 0 4l5 4z" fill="#c0c0c0" /></svg>
        <svg width="5" height="8" viewBox="0 0 5 8"><path d="M0 0l5 4-5 4z" fill="#c0c0c0" /></svg>
      </div>
      <div className="w-[57px] h-[25px] bg-white border-b-2 border-[#217346] flex items-center justify-center pt-[1px] text-[#217346] font-bold text-[13.5px] font-['Lato',sans-serif]">Sayfa1</div>
      <div className="ml-[33px] mt-[6px] w-[17px] h-[17px] rounded-full border border-[#777] flex items-center justify-center">
        <svg width="9" height="9" viewBox="0 0 9 9" stroke="#777" strokeWidth="1.500"><path d="M4.500 0v9M0 4.500h9" /></svg>
      </div>
      <div className="ml-[19px] mt-[8px] flex flex-col gap-[2px]">
        <div className="w-[2px] h-[2px] bg-[#aaa]" />
        <div className="w-[2px] h-[2px] bg-[#aaa]" />
        <div className="w-[2px] h-[2px] bg-[#aaa]" />
      </div>
      <div className="ml-[15px] mt-[6px] w-[1655px] h-[15px] bg-[#dbdbdb] flex items-stretch">
        <div className="w-[15px] bg-white border border-[#ababab] flex items-center justify-center">
          <svg width="4" height="7" viewBox="0 0 4 7"><path d="M4 0 0 3.500 4 7z" fill="#666" /></svg>
        </div>
        <div className="w-[903px] bg-white border-y border-r border-[#ababab]" />
        <div className="flex-1" />
        <div className="w-[14px] bg-white border border-[#ababab] flex items-center justify-center">
          <svg width="4" height="7" viewBox="0 0 4 7"><path d="M0 0l4 3.500L0 7z" fill="#666" /></svg>
        </div>
      </div>
    </div>
  );
}

function StatusBar() {
  return (
    <div className="h-[22px] bg-[#f1f1f1] border-t border-[#d4d4d4] flex items-stretch text-[11px] text-[#555]">
      <span className="ml-[7px] self-center -mt-[2px]">Hazır</span>
      <div className="flex-1" />
      <div className="w-[38px] bg-[#c6c6c6] flex items-center justify-center pb-[2px]">
        <svg width="14" height="14" viewBox="0 0 14 14" fill="none" stroke="#666"><path d="M.5.500h13v13H.5zM.5 5h13M.5 9.500h13M5 .5v13M9.500.5v13" /></svg>
      </div>
      <div className="flex items-center -mt-[2px]">
        <div className="w-[38px] flex justify-center">
          <svg width="14" height="14" viewBox="0 0 14 14" fill="none" stroke="#666"><path d="M.5.500h13v13H.5zM3.500 3.500h7v7h-7zM3.500 5.500h7M3.500 7.500h7" /></svg>
        </div>
        <div className="w-[38px] flex justify-center">
          <svg width="14" height="14" viewBox="0 0 14 14" fill="none" stroke="#666"><path d="M.5.500h13v13H.5zM.5 8.500h6v-8" /></svg>
        </div>
        <div className="ml-[5px] w-[6px] h-[2px] bg-[#666]" />
        <div className="ml-[4px] w-[100px] h-px bg-[#999] flex items-center">
          <div className="ml-[48px] w-[4px] h-[13px] bg-[#666]" />
        </div>
        <svg className="ml-[4px]" width="9" height="9" viewBox="0 0 9 9" stroke="#666" strokeWidth="2"><path d="M4.500 0v9M0 4.500h9" /></svg>
        <span className="ml-[14px] mr-[9px] w-[27px] whitespace-nowrap text-[#666]">%100</span>
      </div>
    </div>
  );
}

export default function App() {
  return (
    <div className="w-[1920px] h-[1041px] overflow-hidden flex flex-col font-['Open_Sans',sans-serif] text-[12px]">
      <div className="bg-[#217346]">
        <TitleBar />
        <TabsBar />
      </div>
      <Ribbon />
      <FormulaBar />
      <Sheet />
      <SheetTabs />
      <StatusBar />
      <div className="h-px bg-[#1e1e3c]" />
    </div>
  );
}
